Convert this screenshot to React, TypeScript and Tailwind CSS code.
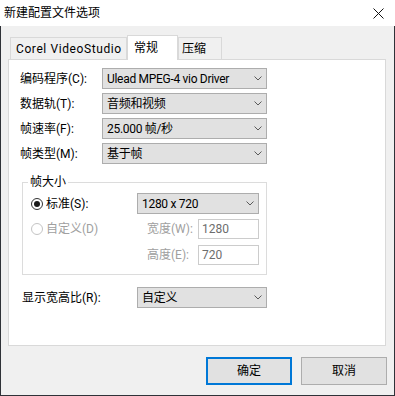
import React from "react";

const font = {
  fontFamily: 'Roboto, "Noto Sans CJK SC", sans-serif',
};

function Chevron() {
  return (
    <svg width="8" height="5" viewBox="0 0 8 5" className="shrink-0">
      <polyline points="0.5,0.5 4,4 7.5,0.5" fill="none" stroke="#5a5a5a" strokeWidth="1" />
    </svg>
  );
}

function Combo({ value, className }: { value: string; className: string }) {
  return (
    <div
      className={`flex items-center justify-between h-[21px] bg-[#e1e1e1] border border-[#adadad] pl-[4px] pr-[4px] text-[12px] text-black leading-none ${className}`}
    >
      <span className="tracking-[-0.3px]">{value}</span>
      <Chevron />
    </div>
  );
}

function Row({ label, value }: { label: string; value: string }) {
  return (
    <div className="flex items-center">
      <div className="w-[82px] text-[12px] text-black leading-none">{label}</div>
      <Combo value={value} className="w-[165px]" />
    </div>
  );
}

function Radio({ checked, disabled }: { checked?: boolean; disabled?: boolean }) {
  return (
    <div
      className={`w-[12px] h-[12px] rounded-full border bg-white flex items-center justify-center ${
        disabled ? "border-[#c4c4c4]" : "border-[#333333]"
      }`}
    >
      {checked && <div className="w-[6px] h-[6px] rounded-full bg-[#1a1a1a]" />}
    </div>
  );
}

function Field({ label, value }: { label: string; value: string }) {
  return (
    <div className="flex items-center w-[122px]">
      <div className="w-[61px] pl-[10px] text-[12px] text-[#a0a0a0] leading-none">{label}</div>
      <div className="w-[61px] h-[20px] border border-[#cccccc] bg-white flex items-center pl-[3px] text-[12px] text-[#6d6d6d] leading-none">
        {value}
      </div>
    </div>
  );
}

export default function App() {
  return (
    <div className="w-[395px] h-[396px] flex flex-col bg-white" style={font}>
      {/* title bar */}
      <div className="h-[26px] bg-white flex items-center justify-between pl-[4px] pr-[11px]">
        <span className="text-[12px] text-black leading-none">新建配置文件选项</span>
        <svg width="11" height="11" viewBox="0 0 11 11">
          <line x1="0.5" y1="0.5" x2="10.5" y2="10.5" stroke="#111" strokeWidth="1" />
          <line x1="10.5" y1="0.5" x2="0.5" y2="10.5" stroke="#111" strokeWidth="1" />
        </svg>
      </div>

      <div className="flex-1 flex flex-col bg-[#f0f0f0] border-l border-r border-b border-[#2f3238]">
        {/* tabs */}
        <div className="relative z-10 flex items-end h-[34px] pl-[9px]">
          <div className="w-[117px] h-[23px] border border-[#d9d9d9] bg-[#f0f0f0] flex items-center pl-[5px] text-[12px] tracking-[0.6px] text-black leading-none">
            Corel VideoStudio
          </div>
          <div className="w-[51px] h-[25px] border-t border-l border-r border-[#d9d9d9] bg-white flex items-center pl-[6px] text-[12px] text-black leading-none">
            常规
          </div>
          <div className="w-[44px] h-[23px] border border-[#d9d9d9] bg-[#f0f0f0] flex items-center pl-[3px] text-[12px] text-black leading-none">
            压缩
          </div>
        </div>

        {/* panel */}
        <div className="-mt-px ml-[7px] w-[378px] h-[287px] bg-white border border-[#d9d9d9] pt-[8px] pl-[11px] flex flex-col">
          <div className="flex flex-col gap-[4px]">
            <Row label="编码程序(C):" value="Ulead MPEG-4 vio Driver" />
            <Row label="数据轨(T):" value="音频和视频" />
            <Row label="帧速率(F):" value="25.000 帧/秒" />
            <Row label="帧类型(M):" value="基于帧" />
          </div>

          {/* group box */}
          <div className="relative mt-[18px] ml-[2px] w-[245px] border border-[#dcdcdc] pt-[10px] pb-[9px] pl-[8px]">
            <span className="absolute -top-[9px] left-[5px] bg-white px-[2px] text-[12px] text-black leading-[16px]">
              帧大小
            </span>
            <div className="flex items-center">
              <div className="w-[106px] flex items-center gap-[3px]">
                <Radio checked />
                <span className="text-[12px] text-black leading-none">标准(S):</span>
              </div>
              <Combo value="1280 x 720" className="w-[122px]" />
            </div>
            <div className="flex items-center mt-[5px]">
              <div className="w-[106px] flex items-center gap-[3px]">
                <Radio disabled />
                <span className="text-[12px] text-[#a0a0a0] leading-none">自定义(D)</span>
              </div>
              <Field label="宽度(W):" value="1280" />
            </div>
            <div className="flex items-center mt-[6px]">
              <div className="w-[106px]" />
              <Field label="高度(E):" value="720" />
            </div>
          </div>

          <div className="flex items-center mt-[12px] ml-[2px]">
            <div className="w-[115px] text-[12px] text-black leading-none">显示宽高比(R):</div>
            <Combo value="自定义" className="w-[130px]" />
          </div>
        </div>

        {/* buttons */}
        <div className="flex justify-end gap-[9px] mt-[11px] pr-[7px]">
          <button className="w-[86px] h-[28px] bg-[#e1e1e1] border-2 border-[#0078d7] text-[12px] text-black leading-none">
            确定
          </button>
          <button className="w-[86px] h-[28px] bg-[#e1e1e1] border border-[#adadad] text-[12px] text-black leading-none">
            取消
          </button>
        </div>
      </div>
    </div>
  );
}
